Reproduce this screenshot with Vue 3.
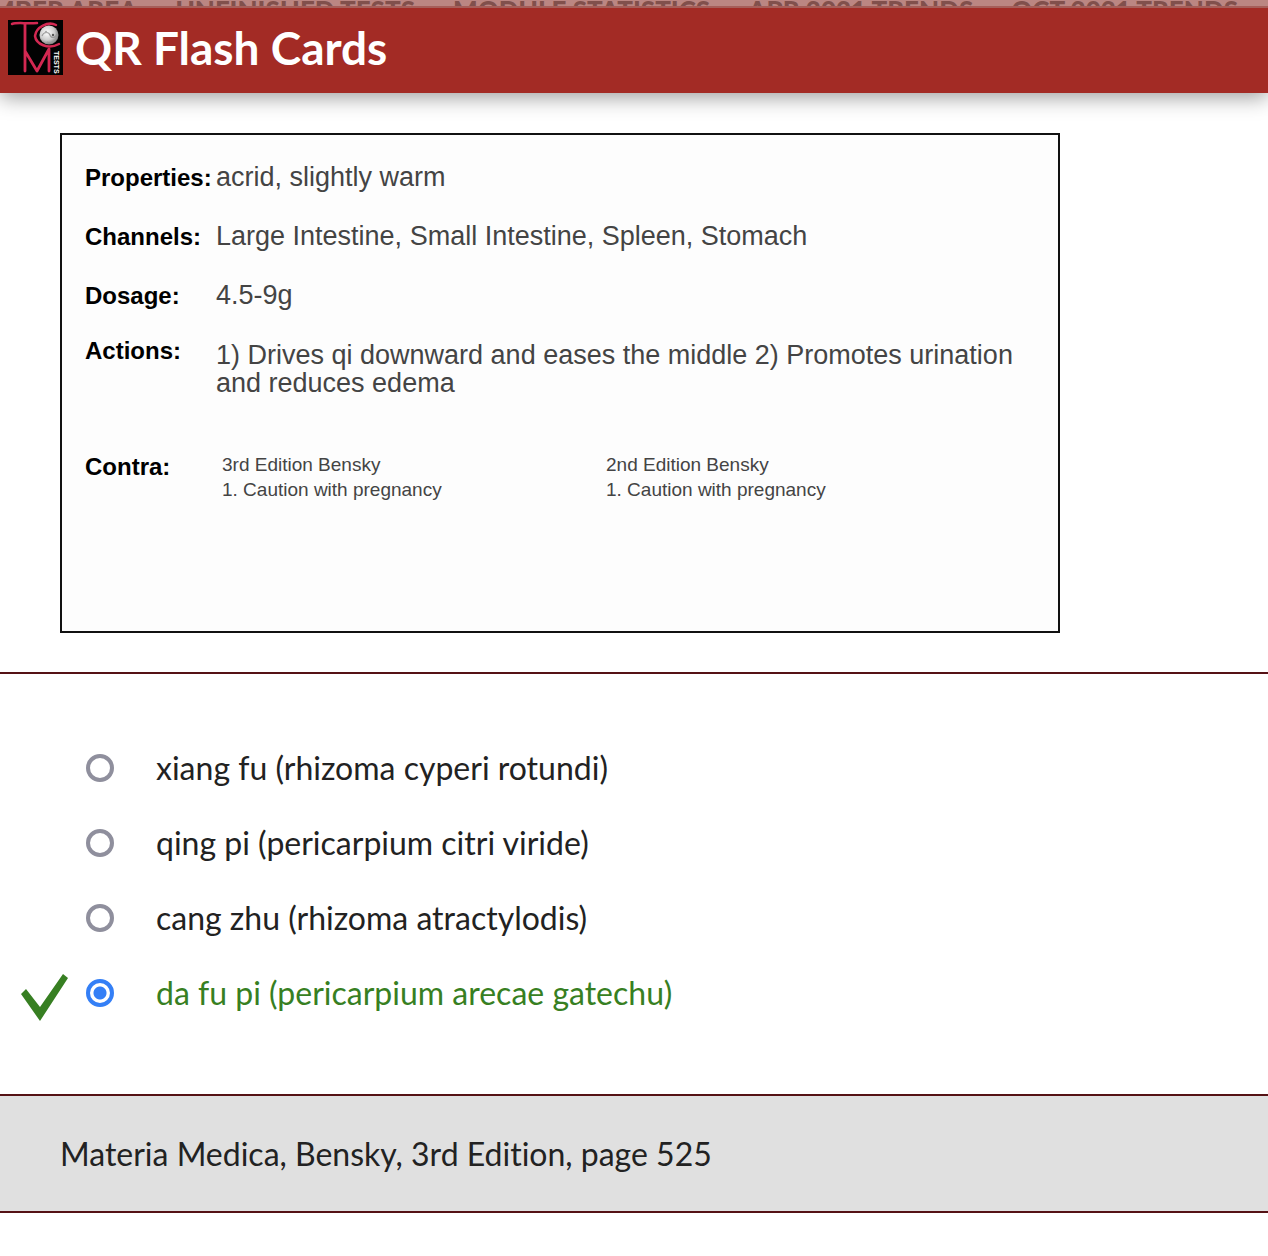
<script setup>
import { ref } from 'vue'

const links = ['MEMBER AREA', 'UNFINISHED TESTS', 'MODULE STATISTICS', 'APR 2021 TRENDS', 'OCT 2021 TRENDS']

const editions = [
  { name: '3rd Edition Bensky', note: '1. Caution with pregnancy' },
  { name: '2nd Edition Bensky', note: '1. Caution with pregnancy' },
]

const options = [
  'xiang fu (rhizoma cyperi rotundi)',
  'qing pi (pericarpium citri viride)',
  'cang zhu (rhizoma atractylodis)',
  'da fu pi (pericarpium arecae gatechu)',
]
const correct = 3
const chosen = ref(3)
</script>

<template>
  <div class="page">
    <nav class="nav">
      <a v-for="link in links" :key="link" href="#">{{ link }}</a>
    </nav>
    <header class="header">
      <svg class="logo" viewBox="0 0 55 55" role="img" aria-label="TCM Tests">
        <defs>
          <radialGradient id="ball" cx="40%" cy="38%" r="65%">
            <stop offset="0" stop-color="#fff" />
            <stop offset="0.6" stop-color="#ccc" />
            <stop offset="1" stop-color="#777" />
          </radialGradient>
        </defs>
        <rect width="55" height="55" fill="#020202" />
        <g fill="none" stroke="#d32852" stroke-linecap="round" stroke-linejoin="round">
          <path d="M4 4C9 2 18 4 29 3" stroke-width="2.5" />
          <path d="M17 4V51M17 31L29 51L41 29V51" stroke-width="2.8" />
          <path d="M48 5C40 1 28 7 27 16C28 24 40 30 51 24" stroke-width="2.5" />
        </g>
        <circle cx="41" cy="15" r="9.5" fill="url(#ball)" />
        <path d="M34 16C36 11 41 12 42 15S47 19 49 14C49 21 44 24 39 22" fill="none" stroke="#999" stroke-width="1.2" />
        <circle cx="38" cy="12" r="1.2" fill="#aaa" />
        <circle cx="45" cy="15" r="1.2" fill="#555" />
        <text class="logo-text" transform="translate(46 31) rotate(90)">TESTS</text>
      </svg>
      <h1>QR Flash Cards</h1>
    </header>

    <main>
      <section class="question">
        <dl class="card">
          <div class="row">
            <dt>Properties:</dt>
            <dd>acrid, slightly warm</dd>
          </div>
          <div class="row">
            <dt>Channels:</dt>
            <dd>Large Intestine, Small Intestine, Spleen, Stomach</dd>
          </div>
          <div class="row">
            <dt>Dosage:</dt>
            <dd>4.5-9g</dd>
          </div>
          <div class="row actions">
            <dt>Actions:</dt>
            <dd>1) Drives qi downward and eases the middle 2) Promotes urination and reduces edema</dd>
          </div>
          <div class="row contra">
            <dt>Contra:</dt>
            <dd>
              <p v-for="e in editions" :key="e.name">{{ e.name }}<br />{{ e.note }}</p>
            </dd>
          </div>
        </dl>
      </section>

      <form class="options">
        <label v-for="(option, i) in options" :key="option" :class="{ correct: i === correct }">
          <span class="mark">
            <svg v-if="i === correct" width="48" height="48" viewBox="0 0 48 48" aria-hidden="true">
              <path d="M1 20L6 15L20 33L43 0L48 4L20 47Z" fill="#377f22" />
            </svg>
          </span>
          <input v-model="chosen" type="radio" name="answer" :value="i" />
          <span>{{ option }}</span>
        </label>
      </form>

      <footer class="source">Materia Medica, Bensky, 3rd Edition, page 525</footer>
    </main>
  </div>
</template>

<style>
body {
  margin: 0;
  background: #fff;
}
</style>

<style scoped>
.page {
  font-family: Lato, sans-serif;
  font-size: 32px;
  font-variant-ligatures: none;
  color: #222;
}

.nav {
  position: relative;
  z-index: 1;
  display: flex;
  justify-content: flex-end;
  gap: 38px;
  height: 6px;
  padding-right: 30px;
  overflow: hidden;
  background: #bb8682;
  border-bottom: 2px solid #a65e59;
}

.nav a {
  flex: none;
  font-size: 26px;
  font-weight: 900;
  line-height: 20px;
  white-space: nowrap;
  text-decoration: none;
  color: #81504c;
}

.header {
  display: flex;
  align-items: center;
  gap: 12px;
  height: 85px;
  padding: 0 8px;
  box-sizing: border-box;
  background: #a32b25;
  box-shadow: 0 4px 20px rgba(0, 0, 0, 0.4);
}

.logo {
  flex: none;
  width: 55px;
  height: 55px;
  margin-bottom: 6px;
}

.logo-text {
  font-family: "Liberation Sans", sans-serif;
  font-size: 7px;
  font-weight: 700;
  fill: #fff;
}

h1 {
  margin: 0 0 6px;
  font-size: 46px;
  font-weight: 700;
  line-height: 56px;
  color: #fff;
}

.question {
  padding: 40px 60px 39px;
  border-bottom: 2px solid #551215;
}

.card {
  max-width: 1000px;
  min-height: 500px;
  margin: 0;
  padding: 28px 23px;
  box-sizing: border-box;
  border: 2px solid #111;
  background: #fdfdfd;
  font-family: "Liberation Sans", sans-serif;
}

.row {
  display: flex;
  margin-bottom: 29px;
}

dt {
  flex: none;
  width: 131px;
  font-size: 24px;
  font-weight: 700;
  line-height: 30px;
  color: #000;
}

dd {
  flex: 1;
  margin: 0;
  font-size: 27px;
  line-height: 28px;
  color: #444;
}

.actions {
  margin-top: -4px;
  margin-bottom: 55px;
}

.actions dd {
  padding-top: 5px;
}

.contra dd {
  display: flex;
  padding-left: 6px;
  font-size: 19px;
  line-height: 25px;
}

.contra p {
  width: 384px;
  margin: 0;
}

.options {
  display: flex;
  flex-direction: column;
  padding: 56px 20px 64px;
}

.options label {
  display: flex;
  align-items: center;
  min-height: 75px;
}

.mark {
  display: flex;
  flex: none;
  width: 66px;
  padding-top: 10px;
}

input {
  flex: none;
  width: 28px;
  height: 28px;
  margin: 0 42px 0 0;
  appearance: none;
  border: 4px solid #8f8f9d;
  border-radius: 50%;
  background: #fff;
}

input:checked {
  border-color: #347ff6;
  background: radial-gradient(circle, #347ff6 6px, #fff 7px);
}

.correct {
  color: #377f22;
}

.source {
  padding: 40px 60px;
  line-height: 35px;
  border-top: 2px solid #551215;
  border-bottom: 2px solid #551215;
  background: #e0e0e0;
}
</style>
